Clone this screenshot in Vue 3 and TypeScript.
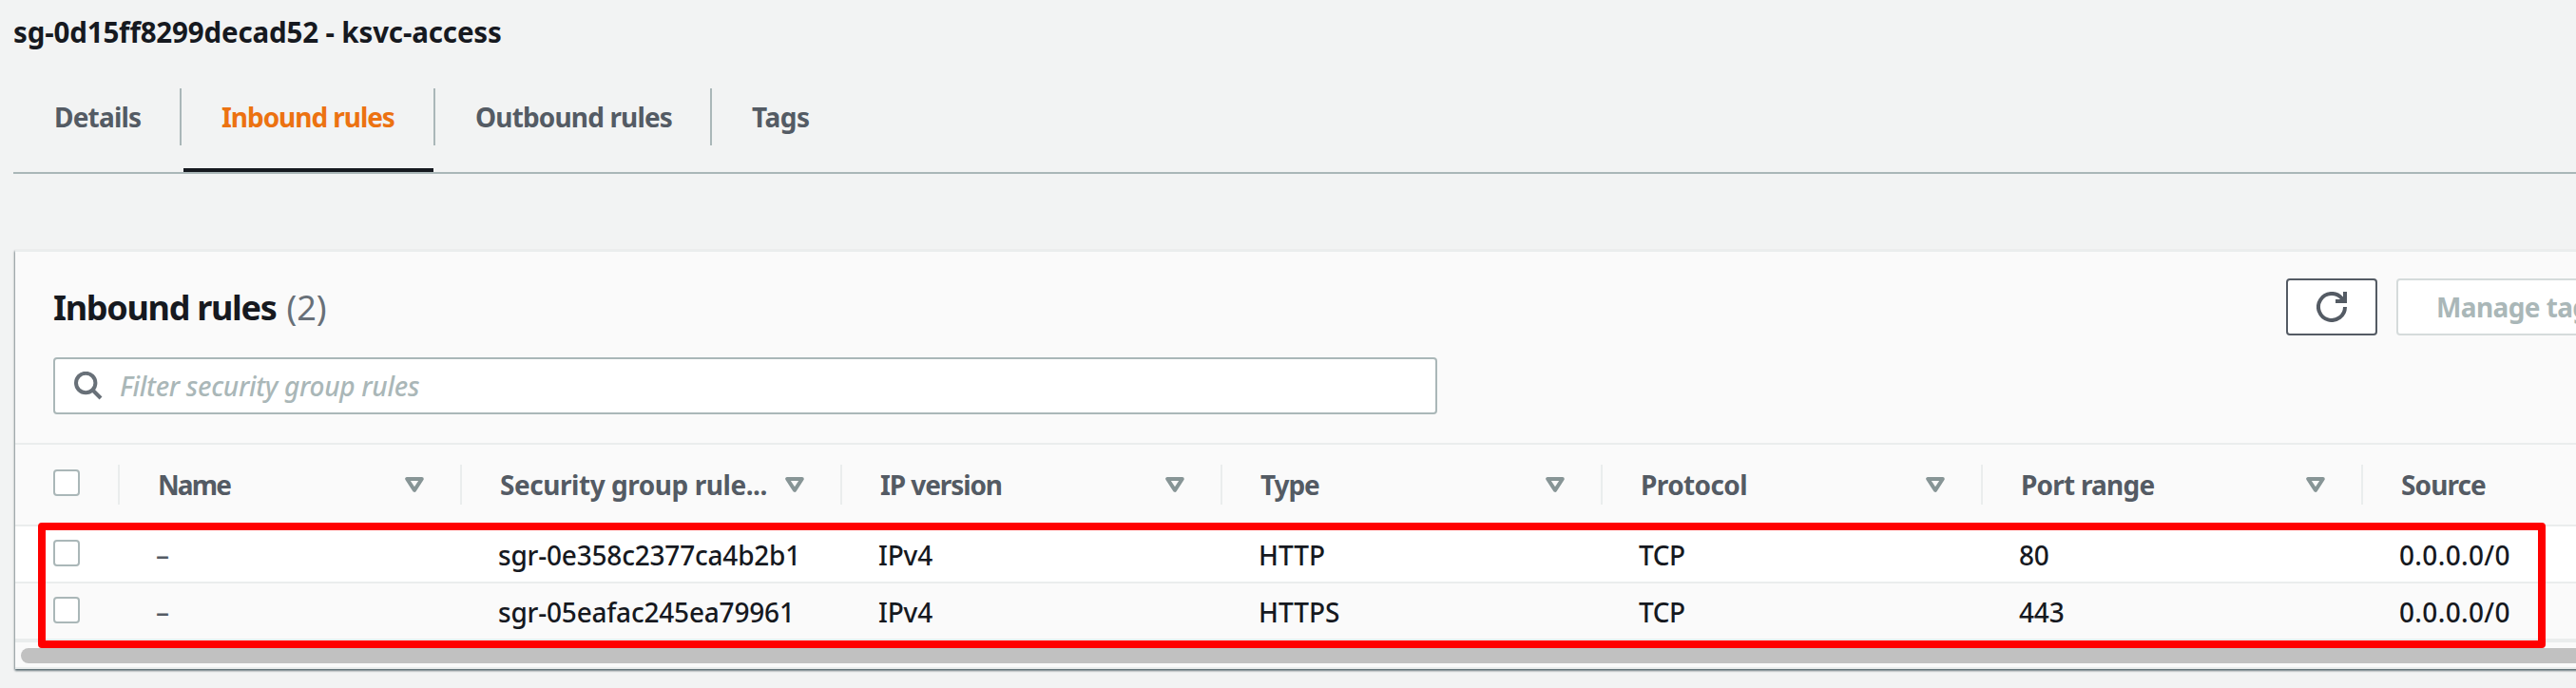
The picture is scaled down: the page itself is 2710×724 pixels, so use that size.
<script setup lang="ts">
interface Tab { label: string; tracking: number; active?: boolean }
interface Column { key: keyof Rule; label: string; tracking: number; sortable: boolean }
interface Rule {
  name: string
  id: string
  ip: string
  type: string
  protocol: string
  port: string
  source: string
}

const tabs: Tab[] = [
  { label: 'Details', tracking: -0.8 },
  { label: 'Inbound rules', tracking: -1.05, active: true },
  { label: 'Outbound rules', tracking: -0.85 },
  { label: 'Tags', tracking: -0.5 },
]

const columns: Column[] = [
  { key: 'name', label: 'Name', tracking: -1.9, sortable: true },
  { key: 'id', label: 'Security group rule...', tracking: -0.45, sortable: true },
  { key: 'ip', label: 'IP version', tracking: -1.1, sortable: true },
  { key: 'type', label: 'Type', tracking: -1.1, sortable: true },
  { key: 'protocol', label: 'Protocol', tracking: -0.6, sortable: true },
  { key: 'port', label: 'Port range', tracking: -0.78, sortable: true },
  { key: 'source', label: 'Source', tracking: -0.9, sortable: false },
]

const rules: Rule[] = [
  { name: '–', id: 'sgr-0e358c2377ca4b2b1', ip: 'IPv4', type: 'HTTP', protocol: 'TCP', port: '80', source: '0.0.0.0/0' },
  { name: '–', id: 'sgr-05eafac245ea79961', ip: 'IPv4', type: 'HTTPS', protocol: 'TCP', port: '443', source: '0.0.0.0/0' },
]
</script>

<template>
  <main class="page">
    <h1 class="title">sg-0d15ff8299decad52 - ksvc-access</h1>

    <nav class="tabs">
      <div v-for="tab in tabs" :key="tab.label" class="tab" :class="{ active: tab.active }">
        <span class="tab-label" :style="{ letterSpacing: tab.tracking + 'px' }">{{ tab.label }}</span>
      </div>
    </nav>

    <section class="panel">
      <header class="panel-head">
        <h2 class="heading"><span class="heading-text">Inbound rules</span><span class="count">(2)</span></h2>
        <div class="actions">
          <button class="btn refresh" aria-label="Refresh">
            <svg width="32" height="32" viewBox="0 0 32 32" fill="none" stroke="#545b64" stroke-width="4">
              <path d="M30 16A14 14 0 1 1 26.500 6.700L29 10" />
              <path d="M30 0V10H20" />
            </svg>
          </button>
          <button class="btn manage" disabled>Manage tags</button>
        </div>
      </header>

      <div class="filter">
        <svg class="search" width="30" height="30" viewBox="0 0 30 30" fill="none" stroke="#687078" stroke-width="4">
          <circle cx="12.200" cy="12" r="10.200" />
          <path d="M19.500 19.500L28 28" />
        </svg>
        <span class="placeholder">Filter security group rules</span>
      </div>

      <div class="grid head">
        <div class="check"><span class="box"></span></div>
        <div v-for="col in columns" :key="col.key" class="th">
          <span :style="{ letterSpacing: col.tracking + 'px' }">{{ col.label }}</span>
          <svg v-if="col.sortable" width="20" height="16" viewBox="0 0 20 16" fill="none" stroke="#879596" stroke-width="4" stroke-linejoin="round">
            <path d="M2.200 2H17.800L10 13.800Z" />
          </svg>
        </div>
      </div>

      <div class="rows">
        <div v-for="rule in rules" :key="rule.id" class="grid row">
          <div class="check"><span class="box"></span></div>
          <div v-for="col in columns" :key="col.key" class="td" :class="'td-' + col.key">{{ rule[col.key] }}</div>
        </div>
        <div class="highlight"></div>
      </div>

      <div class="scroller"><div class="thumb"></div></div>
    </section>
  </main>
</template>

<style>
html,
body {
  margin: 0;
  background: #f2f3f3;
  overflow: hidden;
}
</style>

<style scoped>
.page {
  box-sizing: border-box;
  width: 2710px;
  height: 724px;
  padding-left: 14px;
  overflow: hidden;
  background: #f2f3f3;
  color: #16191f;
  font-family: "Noto Sans", "Open Sans", sans-serif;
  font-size: 28px;
  line-height: 44px;
}

.title {
  height: 93px;
  margin: 0;
  padding-top: 12px;
  box-sizing: border-box;
  font-size: 29.5px;
  font-weight: 700;
  letter-spacing: -0.15px;
  white-space: nowrap;
}

.tabs {
  display: flex;
  height: 88px;
  border-bottom: 2px solid #aab7b8;
}

.tab {
  position: relative;
  box-sizing: border-box;
  height: 60px;
  padding: 8px 0 0 42px;
  border-right: 2px solid #aab7b8;
  color: #545b64;
  font-weight: 700;
  white-space: nowrap;
}

.tab:nth-child(1) { width: 177px; padding-left: 43px; }
.tab:nth-child(2) { width: 267px; }
.tab:nth-child(3) { width: 291px; }
.tab:nth-child(4) { border-right: 0; }

.tab.active {
  color: #ec7211;
}

.tab.active::after {
  content: "";
  position: absolute;
  left: 2px;
  right: 0;
  top: 84px;
  height: 4px;
  background: #16191f;
}

.panel {
  box-sizing: border-box;
  width: 2700px;
  height: 441px;
  margin: 80px 0 0 2px;
  background: #fafafa;
  border-top: 2px solid #eaeded;
  border-bottom: 2px solid #eaeded;
  box-shadow: 0 2px 2px 0 rgba(0, 28, 36, 0.5), -1px 1px 2px 0 rgba(0, 28, 36, 0.3);
}

.panel-head {
  display: flex;
  justify-content: space-between;
  box-sizing: border-box;
  height: 111px;
  padding: 28px 0 0 40px;
}

.heading {
  display: flex;
  gap: 11px;
  margin: 0;
  padding-top: 5px;
  font-size: 36px;
  line-height: 52px;
  white-space: nowrap;
}

.heading-text {
  letter-spacing: -1.3px;
}

.count {
  color: #687078;
  font-weight: 400;
}

.actions {
  display: flex;
  gap: 20px;
  width: 311px;
}

.btn {
  box-sizing: border-box;
  flex: none;
  height: 60px;
  padding: 0;
  border: 2px solid #545b64;
  border-radius: 4px;
  background: #fff;
  font: 700 28px/44px "Noto Sans", "Open Sans", sans-serif;
  color: #545b64;
}

.refresh {
  display: flex;
  align-items: center;
  justify-content: center;
  width: 96px;
}

.manage {
  width: 242px;
  border-color: #d5dbdb;
  color: #aab7b8;
  letter-spacing: -0.6px;
  text-align: left;
  padding-left: 40px;
  white-space: nowrap;
}

.filter {
  display: flex;
  align-items: center;
  box-sizing: border-box;
  width: 1456px;
  height: 60px;
  margin-left: 40px;
  padding-left: 20px;
  border: 2px solid #aab7b8;
  border-radius: 4px;
  background: #fff;
}

.placeholder {
  margin-left: 18px;
  color: #aab7b8;
  font-style: italic;
  font-weight: 500;
  letter-spacing: -0.3px;
}

.grid {
  display: grid;
  grid-template-columns: 108px 360px repeat(6, 400px);
}

.head {
  box-sizing: border-box;
  height: 88px;
  margin-top: 30px;
  border-top: 2px solid #eaeded;
  border-bottom: 2px solid #eaeded;
}

.check {
  box-sizing: border-box;
  padding-left: 40px;
}

.head .check {
  padding-top: 26px;
}

.row .check {
  padding-top: 14px;
}

.box {
  display: block;
  box-sizing: border-box;
  width: 28px;
  height: 28px;
  border: 2px solid #aab7b8;
  border-radius: 4px;
  background: #fff;
}

.th {
  display: flex;
  align-items: center;
  justify-content: space-between;
  box-sizing: border-box;
  height: 42px;
  margin-top: 21px;
  padding: 0 38px 0 40px;
  border-left: 2px solid #eaeded;
  color: #545b64;
  font-weight: 700;
  white-space: nowrap;
}

.th svg {
  flex: none;
}

.rows {
  position: relative;
  height: 122px;
}

.row {
  box-sizing: border-box;
  height: 60px;
  border-bottom: 2px solid #eaeded;
  background: #fff;
}

.row:nth-child(2) {
  height: 62px;
  border-bottom-width: 4px;
  background: #fafafa;
}

.td {
  padding: 8px 0 0 40px;
  font-weight: 500;
  white-space: nowrap;
  letter-spacing: -0.2px;
}

.td-name { color: #545b64; }
.td-type { letter-spacing: 0; }
.td-protocol { letter-spacing: -0.5px; }
.td-source { letter-spacing: 0.35px; }

/* Callout drawn over both rule rows. */
.highlight {
  position: absolute;
  left: 24px;
  top: -4px;
  box-sizing: border-box;
  width: 2638px;
  height: 132px;
  border: 8px solid #f00;
  border-radius: 4px;
}

.scroller {
  padding: 6px 0 0 6px;
}

.thumb {
  height: 16px;
  border-radius: 8px 0 0 8px;
  background: #c1c1c1;
}
</style>
